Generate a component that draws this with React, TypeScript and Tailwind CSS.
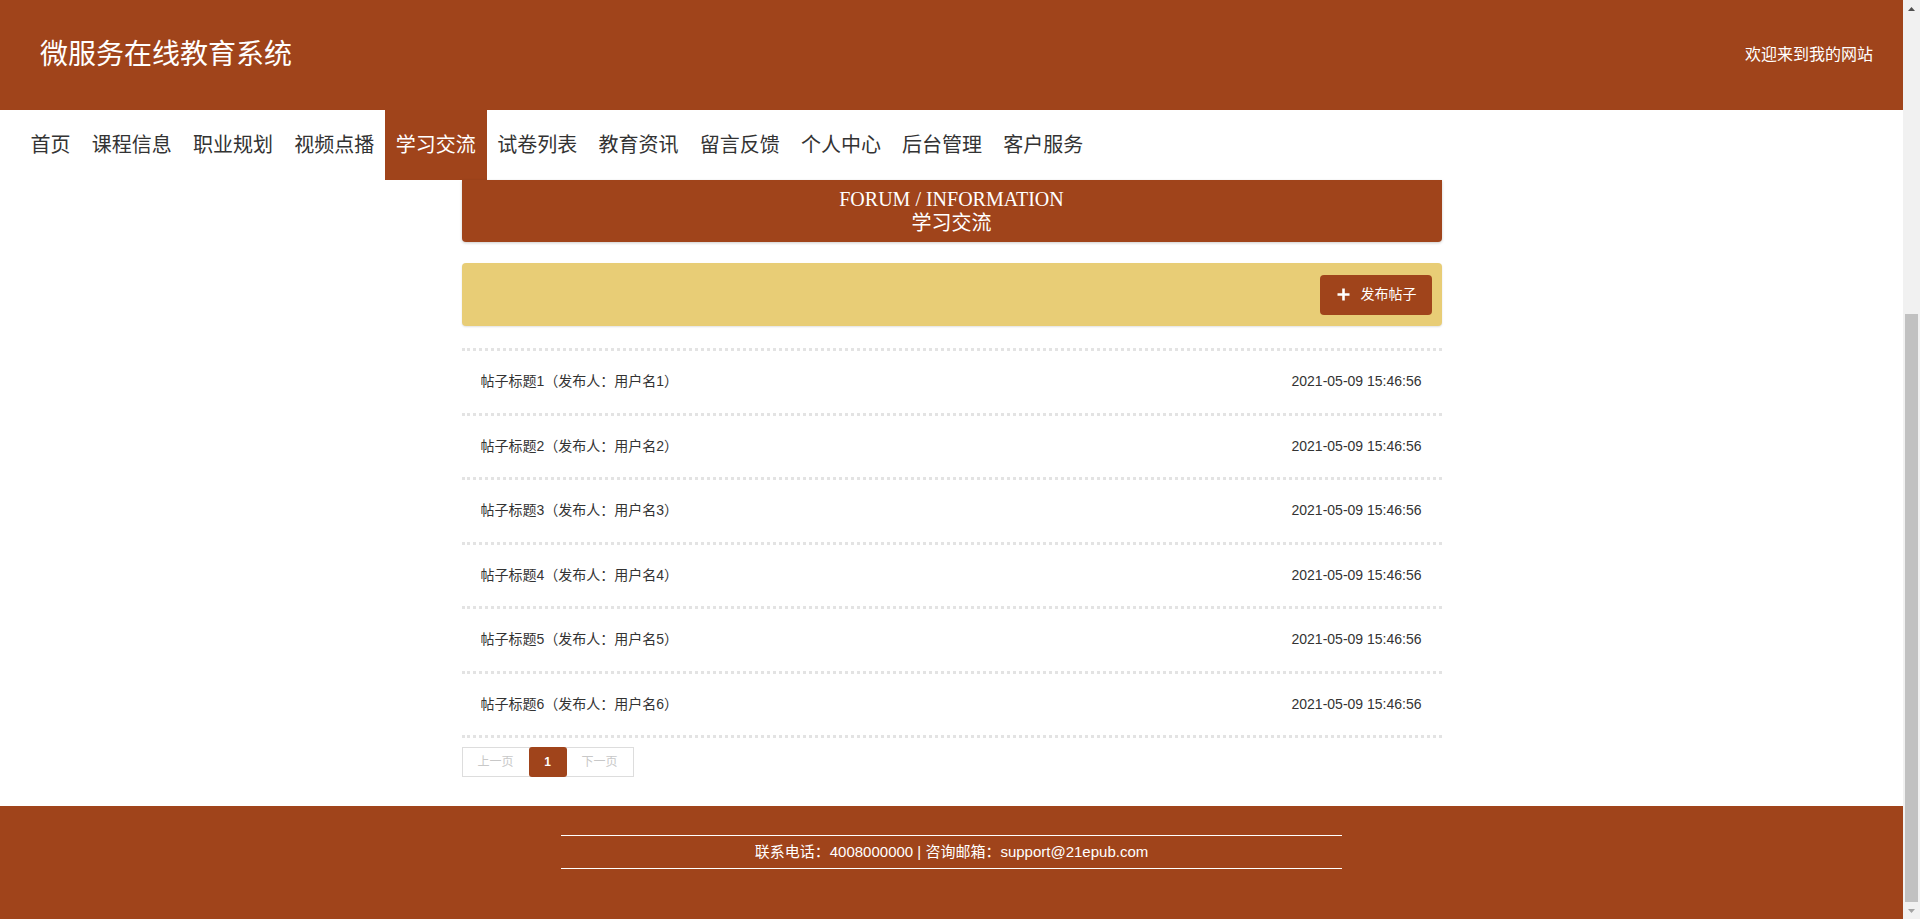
import React from 'react';

const navItems = ['首页', '课程信息', '职业规划', '视频点播', '学习交流', '试卷列表', '教育资讯', '留言反馈', '个人中心', '后台管理', '客户服务'];

const posts = [1, 2, 3, 4, 5, 6].map((n) => ({
  id: n,
  title: `帖子标题${n}（发布人：用户名${n}）`,
  time: '2021-05-09 15:46:56',
}));

function Header() {
  return (
    <header className="h-[110px] shrink-0 bg-[#a0441b] flex items-center justify-between pl-[40px] pr-[30px] text-white">
      <h1 className="text-[28px] leading-none">微服务在线教育系统</h1>
      <span className="text-[16px]">欢迎来到我的网站</span>
    </header>
  );
}

function Nav() {
  return (
    <nav className="h-[70px] shrink-0 bg-white flex pl-[20px]">
      {navItems.map((item) => (
        <a
          key={item}
          className={
            item === '学习交流'
              ? 'h-full flex items-center px-[11px] text-[20px] bg-[#a0441b] text-white'
              : 'h-full flex items-center px-[10.6px] text-[20px] text-[#333]'
          }
        >
          {item}
        </a>
      ))}
    </nav>
  );
}

function PlusIcon() {
  return (
    <svg width="13" height="13" viewBox="0 0 13 13" fill="none">
      <path d="M6.5 0.5v12M0.5 6.5h12" stroke="white" strokeWidth="2.6" />
    </svg>
  );
}

function Forum() {
  return (
    <main className="flex-1 w-[980px] mx-auto">
      <div className="h-[62px] bg-[#a0441b] rounded-b-[4px] shadow-[0_1px_3px_rgba(0,0,0,0.2)] flex flex-col items-center justify-center text-white font-['Liberation_Serif','Noto_Sans_CJK_SC',serif] text-[20px] leading-[24px]">
        <div>FORUM / INFORMATION</div>
        <div>学习交流</div>
      </div>

      <div className="mt-[21px] h-[63px] bg-[#e8cd76] rounded-[4px] shadow-[0_1px_2px_rgba(0,0,0,0.12)] flex items-center justify-end pr-[10px]">
        <button className="h-[40px] w-[112px] rounded-[4px] bg-[#a0441b] text-white text-[14px] flex items-center pl-[17px] gap-[11px]">
          <PlusIcon />
          发布帖子
        </button>
      </div>

      <ul className="mt-[22px] border-t-[3px] border-dotted border-[#e3e3e3]">
        {posts.map((p) => (
          <li
            key={p.id}
            className="h-[64.5px] flex items-center justify-between pl-[19px] pr-[20px] border-b-[3px] border-dotted border-[#e3e3e3] text-[14px] text-[#333]"
          >
            <span>{p.title}</span>
            <span>{p.time}</span>
          </li>
        ))}
      </ul>

      <div className="mt-[9px] inline-flex h-[30px] border border-[#dddddd] text-[12px]">
        <span className="w-[66px] flex items-center justify-center text-[#c8c8c8]">上一页</span>
        <span className="w-[38px] -my-px flex items-center justify-center rounded-[3px] bg-[#a0441b] text-white font-bold">1</span>
        <span className="w-[66px] flex items-center justify-center text-[#c8c8c8]">下一页</span>
      </div>
    </main>
  );
}

function Footer() {
  return (
    <footer className="h-[113px] shrink-0 bg-[#a0441b] pt-[29px]">
      <div className="w-[781px] mx-auto border-t border-b border-white h-[34px] flex items-center justify-center text-white text-[15px]">
        联系电话：4008000000 | 咨询邮箱：support@21epub.com
      </div>
    </footer>
  );
}

function Scrollbar() {
  return (
    <div className="w-[17px] shrink-0 bg-[#f1f1f1] flex flex-col">
      <div className="h-[17px] flex items-center justify-center">
        <svg width="7" height="4" viewBox="0 0 7 4">
          <path d="M3.5 0L7 4H0z" fill="#505050" />
        </svg>
      </div>
      <div className="flex-1 flex flex-col justify-end px-[2px]">
        <div className="h-[588px] bg-[#c1c1c1]" />
      </div>
      <div className="h-[17px] flex items-center justify-center">
        <svg width="7" height="4" viewBox="0 0 7 4">
          <path d="M0 0h7L3.5 4z" fill="#a3a3a3" />
        </svg>
      </div>
    </div>
  );
}

export default function App() {
  return (
    <div className="flex h-[919px] overflow-hidden bg-white font-['Liberation_Sans','Noto_Sans_CJK_SC',sans-serif]">
      <div className="flex-1 min-w-0 flex flex-col">
        <Header />
        <Nav />
        <Forum />
        <Footer />
      </div>
      <Scrollbar />
    </div>
  );
}
